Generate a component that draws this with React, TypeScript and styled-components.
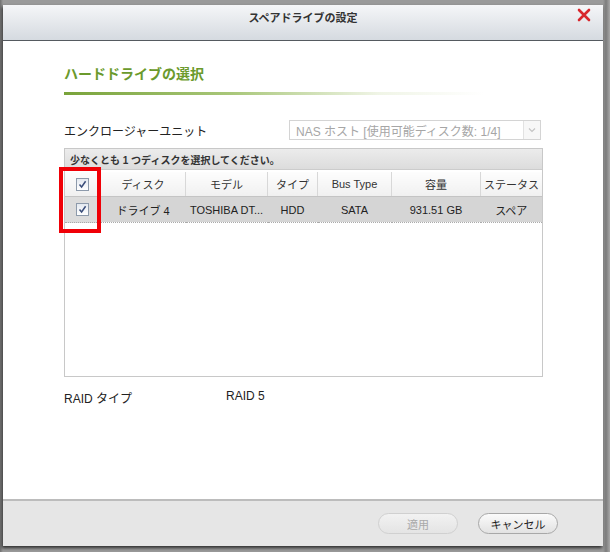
import styled, { createGlobalStyle } from 'styled-components';

const GlobalStyle = createGlobalStyle`
  html, body {
    margin: 0;
    padding: 0;
    background: #8a8a8a;
    font-family: 'Liberation Sans', 'Noto Sans CJK JP', sans-serif;
    color: #222;
  }
`;

const Page = styled.div`
  width: 610px;
  height: 552px;
  padding: 5px 0 0 3px;
  box-sizing: border-box;
  background: linear-gradient(90deg, #6f6f6f 0, #9a9a9a 3px, #9a9a9a 603px, #7c7c7c 606px, #a8a8a8 610px);
`;

const Dialog = styled.div`
  width: 600px;
  height: 541px;
  display: flex;
  flex-direction: column;
  background: #fff;
  box-shadow: -1px 2px 3px rgba(0, 0, 0, 0.7);
`;

const TitleBar = styled.div`
  position: relative;
  height: 36px;
  flex-shrink: 0;
  display: flex;
  align-items: center;
  justify-content: center;
  background: linear-gradient(#f5f6f8, #d5dae0);
  border-bottom: 1px solid #555a60;
  font-size: 11px;
  font-weight: bold;
  color: #333;
  padding-bottom: 12px;
  box-sizing: border-box;
`;

const CloseButton = styled.button`
  position: absolute;
  right: 11px;
  top: 3px;
  border: 0;
  background: none;
  padding: 0;
  width: 16px;
  height: 16px;
  cursor: pointer;
`;

const Body = styled.div`
  flex: 1;
  padding: 24px 57px 0 61px;
  display: flex;
  flex-direction: column;
`;

const SectionTitle = styled.h2`
  margin: 0;
  font-size: 14px;
  font-weight: bold;
  color: #6b9a2c;
  line-height: 18px;
`;

const SectionLine = styled.div`
  margin-top: 9px;
  height: 3px;
  width: 420px;
  background: linear-gradient(90deg, #79a33a 0, #a9c77a 40%, rgba(230, 238, 214, 0.6) 75%, rgba(255, 255, 255, 0) 100%);
`;

const FieldRow = styled.div`
  margin-top: 25px;
  display: flex;
  align-items: center;
  justify-content: space-between;
  font-size: 12px;
`;

const Select = styled.div`
  width: 252px;
  height: 20px;
  box-sizing: border-box;
  border: 1px solid #d4d4d4;
  display: flex;
  align-items: center;
  font-size: 12px;
  color: #a6a6a6;
  padding-left: 6px;
  margin-right: 5px;
  span {
    flex: 1;
  }
`;

const SelectArrow = styled.div`
  width: 16px;
  height: 18px;
  border-left: 1px solid #e2e2e2;
  display: flex;
  align-items: center;
  justify-content: center;
  background: #f7f7f7;
`;

const Panel = styled.div`
  margin-top: 8px;
  width: 479px;
  height: 229px;
  box-sizing: border-box;
  border: 1px solid #c8c8c8;
  position: relative;
`;

const PanelHeader = styled.div`
  height: 20px;
  background: linear-gradient(#ececec, #dcdcdc);
  font-size: 10px;
  font-weight: bold;
  color: #333;
  display: flex;
  align-items: center;
  padding-left: 5px;
  border-bottom: 1px solid #ccc;
`;

const Table = styled.table`
  margin-top: 2px;
  width: 477px;
  border-collapse: collapse;
  font-size: 11px;
  table-layout: fixed;
`;

const HeadCell = styled.th<{ $w?: number }>`
  width: ${(p) => (p.$w ? `${p.$w}px` : 'auto')};
  height: 24px;
  font-weight: normal;
  color: #333;
  text-align: center;
  background: linear-gradient(#fdfdfd, #f0f0f0);
  border-right: 1px solid #d8d8d8;
  border-bottom: 1px solid #c4c4c4;
  padding: 0;
  white-space: nowrap;
  &:last-child {
    border-right: 0;
  }
`;

const Row = styled.tr`
  background: #d5d5d5;
`;

const Cell = styled.td`
  height: 25px;
  text-align: center;
  color: #222;
  padding: 0;
  border-bottom: 1px dotted #aaa;
  white-space: nowrap;
  overflow: hidden;
`;

const CheckCell = styled.td`
  height: 25px;
  text-align: center;
  padding: 0;
  background: #dcdcdc;
  border-bottom: 1px dotted #aaa;
`;

const CheckBox = styled.span`
  display: inline-flex;
  width: 11px;
  height: 11px;
  border: 1px solid #8d9aab;
  background: linear-gradient(#e4e9f0, #fff);
  align-items: center;
  justify-content: center;
  vertical-align: middle;
`;

const Highlight = styled.div`
  position: absolute;
  left: -6px;
  top: 18px;
  width: 42px;
  height: 66px;
  box-sizing: border-box;
  border: 4px solid #f00007;
`;

const InfoRow = styled.div`
  margin-top: 12px;
  display: flex;
  font-size: 12px;
  span:first-child {
    width: 162px;
  }
`;

const Footer = styled.div`
  height: 45px;
  flex-shrink: 0;
  background: #e6e6e6;
  border-top: 2px solid #bcbcbc;
  display: flex;
  align-items: center;
  justify-content: flex-end;
  gap: 20px;
  padding-right: 45px;
`;

const Button = styled.button<{ disabled?: boolean }>`
  width: 80px;
  height: 21px;
  border-radius: 11px;
  border: 1px solid ${(p) => (p.disabled ? '#d0d0d0' : '#a8a8a8')};
  background: ${(p) => (p.disabled ? 'linear-gradient(#f2f2f2, #e4e4e4)' : 'linear-gradient(#fbfbfb, #e2e2e2)')};
  color: ${(p) => (p.disabled ? '#a9a9a9' : '#222')};
  font-family: 'Liberation Sans', 'Noto Sans CJK JP', sans-serif;
  font-size: 11px;
  padding: 0;
`;

const Check = () => (
  <CheckBox>
    <svg width="9" height="9" viewBox="0 0 9 9">
      <path d="M1.5 4.5 L3.6 7 L7.6 1.2" fill="none" stroke="#3a4d7a" strokeWidth="1.5" />
    </svg>
  </CheckBox>
);

const columns = [
  { label: 'ディスク', w: 84 },
  { label: 'モデル', w: 81 },
  { label: 'タイプ', w: 49 },
  { label: 'Bus Type', w: 73 },
  { label: '容量', w: 88 },
  { label: 'ステータス' },
];

const rows = [['ドライブ 4', 'TOSHIBA DT...', 'HDD', 'SATA', '931.51 GB', 'スペア']];

function App() {
  return (
    <>
      <GlobalStyle />
      <Page>
        <Dialog>
          <TitleBar>
            スペアドライブの設定
            <CloseButton aria-label="close">
              <svg width="14" height="14" viewBox="0 0 14 14">
                <path d="M2 2 L12 12 M12 2 L2 12" stroke="#d8262c" strokeWidth="2.6" strokeLinecap="round" />
              </svg>
            </CloseButton>
          </TitleBar>
          <Body>
            <SectionTitle>ハードドライブの選択</SectionTitle>
            <SectionLine />
            <FieldRow>
              <span>エンクロージャーユニット</span>
              <Select>
                <span>NAS ホスト [使用可能ディスク数: 1/4]</span>
                <SelectArrow>
                  <svg width="8" height="6" viewBox="0 0 8 6">
                    <path d="M1 1.5 L4 4.5 L7 1.5" fill="none" stroke="#c4c4c4" strokeWidth="1.2" />
                  </svg>
                </SelectArrow>
              </Select>
            </FieldRow>
            <Panel>
              <PanelHeader>少なくとも 1 つディスクを選択してください。</PanelHeader>
              <Table>
                <thead>
                  <tr>
                    <HeadCell $w={35}>
                      <Check />
                    </HeadCell>
                    {columns.map((c) => (
                      <HeadCell key={c.label} $w={c.w}>
                        {c.label}
                      </HeadCell>
                    ))}
                  </tr>
                </thead>
                <tbody>
                  {rows.map((r) => (
                    <Row key={r[0]}>
                      <CheckCell>
                        <Check />
                      </CheckCell>
                      {r.map((v) => (
                        <Cell key={v}>{v}</Cell>
                      ))}
                    </Row>
                  ))}
                </tbody>
              </Table>
              <Highlight />
            </Panel>
            <InfoRow>
              <span>RAID タイプ</span>
              <span>RAID 5</span>
            </InfoRow>
          </Body>
          <Footer>
            <Button disabled>適用</Button>
            <Button>キャンセル</Button>
          </Footer>
        </Dialog>
      </Page>
    </>
  );
}

export default App;
